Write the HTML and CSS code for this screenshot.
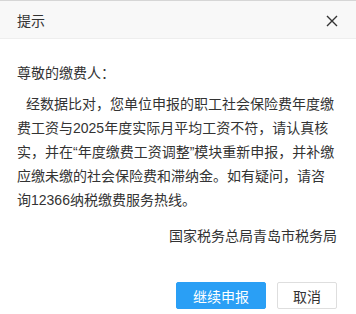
FILE: index.html
```html
<!DOCTYPE html>
<html lang="zh-CN">
<head>
    <meta charset="UTF-8">
    <meta name="viewport" content="width=device-width, initial-scale=1.0">
    <title>提示</title>
    <link rel="stylesheet" href="styles.css">
</head>
<body>
    <div class="dialog">
        <div class="dialog-header">
            <span class="dialog-title">提示</span>
            <span class="dialog-close">
                <svg width="12" height="12" viewBox="0 0 12 12">
                    <path d="M1 1 L11 11 M11 1 L1 11" stroke="#333" stroke-width="1.4" fill="none"/>
                </svg>
            </span>
        </div>

        <div class="dialog-content">
            <p class="greeting">尊敬的缴费人：</p>
            <p class="notice">经数据比对，您单位申报的职工社会保险费年度缴费工资与2025年度实际月平均工资不符，请认真核实，并在“年度缴费工资调整”模块重新申报，并补缴应缴未缴的社会保险费和滞纳金。如有疑问，请咨询12366纳税缴费服务热线。</p>
            <p class="signature">国家税务总局青岛市税务局</p>
        </div>

        <div class="dialog-btns">
            <button class="btn btn-primary">继续申报</button>
            <button class="btn">取消</button>
        </div>
    </div>
</body>
</html>
```

FILE: styles.css
```css
* {
    margin: 0;
    padding: 0;
    box-sizing: border-box;
    font-family: 'Liberation Sans', 'Noto Sans CJK SC', sans-serif;
}

body {
    background-color: #fff;
    color: #333;
    font-size: 14px;
}

.dialog {
    width: 356px;
    height: 314px;
    background-color: #fff;
}

.dialog-header {
    height: 39px;
    background-color: #f8f8f8;
    border-top: 1px solid #d6d6d6;
    border-bottom: 1px solid #eee;
    padding: 0 17px;
    display: flex;
    justify-content: space-between;
    align-items: center;
}

.dialog-title {
    font-size: 14px;
    color: #333;
}

.dialog-close {
    display: flex;
    margin-right: 1px;
    margin-top: 2px;
}

.dialog-content {
    padding: 22px 19px 0 17px;
    line-height: 24px;
}

.greeting {
    margin-bottom: 7px;
}

.notice {
    text-indent: 9px;
}

.signature {
    margin-top: 12px;
    text-align: right;
}

.dialog-btns {
    display: flex;
    justify-content: flex-end;
    gap: 11px;
    padding: 34px 19px 0 0;
}

.btn {
    height: 27px;
    padding: 0 15px;
    border: 1px solid #dedede;
    border-radius: 2px;
    background-color: #fff;
    color: #333;
    font-size: 14px;
    cursor: pointer;
}

.btn-primary {
    padding: 0 16px;
    border-color: #2a9ff5;
    background-color: #2a9ff5;
    color: #fff;
}
```
